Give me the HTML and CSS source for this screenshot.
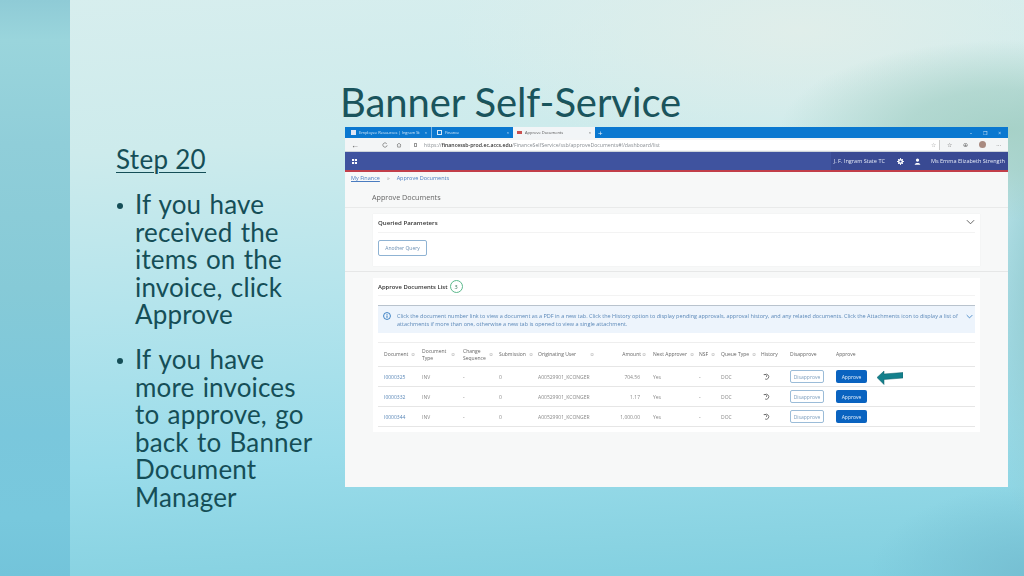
FILE: index.html
```html
<!DOCTYPE html>
<html lang="en">
<head>
<meta charset="utf-8">
<title>Banner Self-Service</title>
<link rel="stylesheet" href="styles.css">
</head>
<body>
<main class="slide">
  <div class="band"></div>
  <section class="notes">
    <h2 class="step">Step 20</h2>
    <ul class="points">
      <li>If you have received the items on the invoice, click Approve</li>
      <li>If you have more invoices to approve, go back to Banner Document Manager</li>
    </ul>
  </section>
  <section class="main">
    <h1 class="title">Banner Self-Service</h1>
    <div class="shot">
      <div class="tabs">
        <div class="tab tab-one"><span class="fav fav-blue"></span><span class="tab-label">Employee Resources | Ingram St</span><span>×</span></div>
        <div class="tab tab-two"><span class="fav fav-page"></span><span class="tab-label">Finance</span><span>×</span></div>
        <div class="tab tab-on"><span class="fav fav-red"></span><span class="tab-label">Approve Documents</span><span>×</span></div>
        <span class="plus">+</span>
        <div class="win"><span>–</span><span>❐</span><span>×</span></div>
      </div>
      <div class="addr">
        <span class="nav-ic">←</span>
        <svg class="ic reload" viewBox="0 0 10 10"><path d="M8 3a3.6 3.6 0 1 0 .6 2.5" fill="none" stroke="#555" stroke-width="1"/></svg>
        <svg class="ic" viewBox="0 0 10 10"><path d="M1.5 5 5 2l3.5 3M2.7 4.500V8.500h4.600V4.500" fill="none" stroke="#555" stroke-width=".9"/></svg>
        <div class="url"><span class="lock"></span><span class="u-dim">https://</span><span class="u-dark">financessb-prod.ec.accs.edu</span><span class="u-dim">/FinanceSelfService/ssb/approveDocuments#!/dashboard/list</span><span class="star">☆</span></div>
        <div class="tools"><span>☆</span><span>⊕</span><span class="avatar"></span><span>···</span></div>
      </div>
      <div class="appbar">
        <svg class="grid-ic" viewBox="0 0 6 6"><path d="M0 0h2.500v2.500H0zM3.500 0H6v2.500H3.500zM0 3.500h2.500V6H0zM3.500 3.500H6V6H3.500z" fill="#fff"/></svg>
        <div class="app-right">
          <span class="inst">J. F. Ingram State TC</span>
          <svg class="gear" viewBox="0 0 10 10"><circle cx="5" cy="5" r="2.600" fill="none" stroke="#fff" stroke-width="2"/><path d="M5 0v2M5 8v2M0 5h2M8 5h2M1.500 1.500l1.400 1.400M7.100 7.100l1.400 1.400M8.500 1.500 7.100 2.900M2.900 7.100 1.500 8.500" stroke="#fff" stroke-width="1.300"/></svg>
          <svg class="person" viewBox="0 0 10 10"><circle cx="5" cy="3" r="2.300" fill="#fff"/><path d="M1 9.500c0-3 8-3 8 0z" fill="#fff"/></svg>
          <span class="user">Ms Emma Elizabeth Strength</span>
        </div>
      </div>
      <div class="page">
        <div class="crumbs"><a class="crumb-root">My Finance</a><span class="crumb-sep">»</span><a>Approve Documents</a></div>
        <div class="page-title">Approve Documents</div>
        <div class="card card-query">
          <div class="card-head"><b>Queried Parameters</b><svg class="chev" viewBox="0 0 10 6"><path d="M1 1l4 4 4-4" fill="none" stroke="#555" stroke-width="1"/></svg></div>
          <button class="btn-query">Another Query</button>
        </div>
        <div class="rule"></div>
        <div class="card card-list">
          <div class="list-head"><b>Approve Documents List</b><span class="badge">3</span></div>
          <div class="info">
            <svg class="info-ic" viewBox="0 0 10 10"><circle cx="5" cy="5" r="4.300" fill="none" stroke="#1668b8" stroke-width="1"/><path d="M5 4.300v3M5 2.500v1" stroke="#1668b8" stroke-width="1.100"/></svg>
            <p>Click the document number link to view a document as a PDF in a new tab. Click the History option to display pending approvals, approval history, and any related documents. Click the Attachments icon to display a list of attachments if more than one, otherwise a new tab is opened to view a single attachment.</p>
            <svg class="info-chev" viewBox="0 0 10 6"><path d="M1 1l4 4 4-4" fill="none" stroke="#1668b8" stroke-width="1"/></svg>
          </div>
          <div class="table">
            <div class="row row-head">
              <span class="c-doc"><span class="h-l">Document</span><i>≎</i></span>
              <span class="c-type"><span class="h-l w-type">Document Type</span><i>≎</i></span>
              <span class="c-chg"><span class="h-l w-chg">Change Sequence</span><i>≎</i></span>
              <span class="c-sub"><span class="h-l">Submission</span><i>≎</i></span>
              <span class="c-user"><span class="h-l w-user">Originating User</span><i>≎</i></span>
              <span class="c-amt"><span class="h-l">Amount</span><i class="i-out">≎</i></span>
              <span class="c-next"><span class="h-l">Next Approver</span><i>≎</i></span>
              <span class="c-nsf"><span class="h-l">NSF</span><i>≎</i></span>
              <span class="c-q"><span class="h-l">Queue Type</span><i>≎</i></span>
              <span class="c-hist">History</span>
              <span class="c-dis">Disapprove</span>
              <span class="c-app">Approve</span>
            </div>
            <div class="row">
              <a class="c-doc">I0000325</a><span class="c-type">INV</span><span class="c-chg">-</span><span class="c-sub">0</span><span class="c-user">A00529901_KCONGER</span><span class="c-amt">704.56</span><span class="c-next">Yes</span><span class="c-nsf">-</span><span class="c-q">DOC</span>
              <span class="c-hist"><svg class="hist" viewBox="0 0 10 10"><path d="M2.500 2.500A3.600 3.600 0 1 1 3 8.600M1 2.200h2.600M5 3.300V5.600" fill="none" stroke="#444" stroke-width="1"/></svg></span>
              <span class="c-dis"><button class="btn-dis">Disapprove</button></span><span class="c-app"><button class="btn-app">Approve</button></span>
              <svg class="arrow" viewBox="0 0 26 15"><path d="M0 7.500 7 1v3L26 2.500V8L7 9.500v5z" fill="#14808c" stroke="#0f5f68" stroke-width=".5"/></svg>
            </div>
            <div class="row">
              <a class="c-doc">I0000332</a><span class="c-type">INV</span><span class="c-chg">-</span><span class="c-sub">0</span><span class="c-user">A00529901_KCONGER</span><span class="c-amt">1.17</span><span class="c-next">Yes</span><span class="c-nsf">-</span><span class="c-q">DOC</span>
              <span class="c-hist"><svg class="hist" viewBox="0 0 10 10"><path d="M2.500 2.500A3.600 3.600 0 1 1 3 8.600M1 2.200h2.600M5 3.300V5.600" fill="none" stroke="#444" stroke-width="1"/></svg></span>
              <span class="c-dis"><button class="btn-dis">Disapprove</button></span><span class="c-app"><button class="btn-app">Approve</button></span>
            </div>
            <div class="row">
              <a class="c-doc">I0000344</a><span class="c-type">INV</span><span class="c-chg">-</span><span class="c-sub">0</span><span class="c-user">A00529901_KCONGER</span><span class="c-amt">1,000.00</span><span class="c-next">Yes</span><span class="c-nsf">-</span><span class="c-q">DOC</span>
              <span class="c-hist"><svg class="hist" viewBox="0 0 10 10"><path d="M2.500 2.500A3.600 3.600 0 1 1 3 8.600M1 2.200h2.600M5 3.300V5.600" fill="none" stroke="#444" stroke-width="1"/></svg></span>
              <span class="c-dis"><button class="btn-dis">Disapprove</button></span><span class="c-app"><button class="btn-app">Approve</button></span>
            </div>
          </div>
        </div>
      </div>
    </div>
  </section>
</main>
</body>
</html>
```
FILE: styles.css
```css
* { box-sizing: border-box; }
html, body { margin: 0; padding: 0; width: 1024px; height: 576px; overflow: hidden; }
body { font-family: "Lato", "Liberation Sans", sans-serif; }

.slide {
  display: flex; width: 1024px; height: 576px; overflow: hidden;
  background:
    radial-gradient(ellipse 230px 90px at 1010px 130px, rgba(165,208,198,.95) 0%, rgba(165,208,198,.7) 45%, rgba(165,208,198,0) 100%),
    radial-gradient(ellipse 70px 240px at 1050px 300px, #8fc6cb 0%, rgba(143,198,203,0) 100%),
    radial-gradient(ellipse 160px 90px at 1030px 576px, #76bfd2 0%, rgba(118,191,210,0) 100%),
    radial-gradient(ellipse 350px 130px at 800px 30px, #e0eeea 0%, rgba(224,238,234,0) 100%),
    linear-gradient(177deg, #d7eeee 0%, #cdebec 25%, #b4e4ec 50%, #9adcea 75%, #89d3e2 92%, #80cfe0 100%);
  color: #154e57;
}
.band { flex: 0 0 70px; background: linear-gradient(180deg, #8fcbd6 0%, #9ad5dc 7%, #90ced9 25%, #86cad7 50%, #7ac7dc 75%, #78c8dd 90%, #73c4da 100%); }

.notes { flex: 0 0 275px; padding: 144px 30px 0 46px; }
.step { margin: 0; font-size: 26px; line-height: 31px; font-weight: 400; text-decoration: underline; text-decoration-thickness: 1px; text-underline-offset: 3px; letter-spacing: .3px; }
.points { list-style: none; margin: 16px 0 0; padding: 0; }
.points li { position: relative; padding-left: 19px; font-size: 26px; line-height: 27.500px; letter-spacing: .15px; word-spacing: 1.500px; margin-bottom: 17.500px; }
.points li::before { content: ""; position: absolute; left: 1px; top: 12px; width: 6px; height: 6px; border-radius: 50%; background: #154e57; }

.main { flex: 1; display: flex; flex-direction: column; }
.title { margin: 77px 0 0 -5px; font-size: 40px; line-height: 50px; font-weight: 400; letter-spacing: -.1px; color: #1a545c; white-space: nowrap; }

.shot { width: 663px; height: 360px; background: #f7f8f8; font-family: "Open Sans", "Liberation Sans", sans-serif; filter: blur(.45px); color: #555; overflow: hidden; }

.tabs { display: flex; align-items: center; height: 11px; background: #0a78d0; font-size: 4px; color: #d6e8f8; }
.tab { display: flex; align-items: center; gap: 3px; height: 11px; padding: 0 4px 0 6px; justify-content: space-between; }
.tab-one { flex: 0 0 86px; }
.tab-two { flex: 0 0 82px; padding-left: 5px; border-left: 1px solid #7ab4e4; }
.tab-on { flex: 0 0 82px; padding-left: 4px; background: #f2f5f7; color: #555; }
.tab-label { flex: 1; white-space: nowrap; overflow: hidden; }
.fav { flex: 0 0 5px; width: 5px; height: 5px; }
.fav-blue { background: #dfe6f5; }
.fav-page { border: 1px solid #d6e8f8; }
.fav-red { background: #c95050; height: 3px; }
.plus { margin-left: 3px; font-size: 8px; color: #e4f0fa; line-height: 8px; }
.win { margin-left: auto; display: flex; gap: 11px; padding-right: 7px; font-size: 5px; color: #cfe4f6; }

.addr { display: flex; align-items: center; height: 14px; background: #f3f5f6; padding-left: 6px; border-bottom: 1px solid #ccd3da; }
.nav-ic { font-size: 8px; line-height: 8px; color: #555; flex: 0 0 31px; }
.ic { flex: 0 0 6px; width: 6px; height: 6px; margin-right: 8px; }
.url { display: flex; align-items: center; flex: 0 0 530px; height: 10px; padding-left: 4px; background: #fff; font-size: 5.200px; white-space: nowrap; border-right: 1px solid #ccc; }
.lock { width: 3px; height: 4px; margin-right: 7px; border: 1px solid #999; }
.u-dim { color: #8a8f94; }
.u-dark { color: #333; font-weight: 600; }
.star { margin-left: auto; margin-right: 3px; color: #999; font-size: 6px; }
.tools { flex: 1; display: flex; align-items: center; justify-content: space-between; padding: 0 7px; font-size: 6px; color: #666; }
.avatar { width: 7px; height: 7px; border-radius: 50%; background: #a98a80; }

.appbar { display: flex; align-items: center; justify-content: space-between; height: 20px; background: #3f539f; border-bottom: 2px solid #c23f4a; color: #e4e9f6; font-size: 5.550px; padding-left: 7px; white-space: nowrap; }
.app-right { display: flex; align-items: center; height: 100%; padding: 0 3px 0 3px; background: #394a93; }
.grid-ic { width: 5px; height: 5px; }
.gear { width: 7px; height: 7px; margin-left: 12px; }
.person { width: 7px; height: 7px; margin-left: 10px; }
.user { margin-left: 10px; }

.page { font-size: 5px; }
.crumbs { display: flex; gap: 7px; padding: 2px 0 0 6px; height: 16px; color: #4a7cc0; font-size: 5.500px; line-height: 9px; }
.crumb-root { text-decoration: underline; }
.crumb-sep { color: #999; }
.page-title { height: 20px; padding: 4px 0 0 27px; font-size: 7.200px; line-height: 10px; color: #666; border-bottom: 1px solid #e9eaea; margin: 0 0 6px; }

.card { background: #fff; margin: 0 28px; }
.card b { font-weight: 600; color: #333; }
.card-query { height: 52px; padding: 0 5px; box-shadow: 0 0 1px #e8e8e8; }
.card-head { display: flex; align-items: center; justify-content: space-between; height: 19px; padding-bottom: 2px; font-size: 6.100px; border-bottom: 1px solid #f3f3f3; }
.chev { width: 9px; height: 6px; }
.btn-query { display: block; margin: 7px 0 0; width: 49px; height: 16px; padding: 0; background: #fff; border: 1px solid #8fb3d3; border-radius: 2px; color: #6b8fb3; font: 5px "Open Sans", sans-serif; }
.rule { border-bottom: 1px solid #e6e7e7; height: 6px; margin-bottom: 6px; }

.card-list { height: 154px; padding: 0 5px; }
.list-head { display: flex; align-items: center; gap: 2px; height: 18px; font-size: 5.900px; border-bottom: 1px solid #f3f3f3; }
.badge { display: flex; align-items: center; justify-content: center; width: 13px; height: 13px; border: 1px solid #5bb98c; border-radius: 50%; color: #2c6b4f; font-size: 5.500px; }
.info { display: flex; gap: 6px; height: 28px; margin-top: 9px; padding: 6px 2px 0 5px; background: #edf4fc; border-top: 1px solid #b9c3cd; color: #5b88b8; font-size: 5.500px; line-height: 8px; }
.info-ic { flex: 0 0 8px; width: 8px; height: 8px; }
.info p { margin: 0; flex: 1; }
.info-chev { flex: 0 0 7px; width: 7px; height: 5px; margin-top: 2px; }

.table { margin-top: 9px; border-top: 1px solid #eee; }
.row { position: relative; display: flex; align-items: center; height: 20px; border-bottom: 1px solid #e6e6e6; font-size: 5px; color: #888; white-space: nowrap; }
.row > * { min-width: 0; }
.row-head { height: 24px; color: #666; line-height: 7px; }
.row-head > span { display: flex; align-items: center; }
.h-l { white-space: normal; }
.w-type { flex: 0 0 24px; margin-right: 2px; }
.w-chg { flex: 0 0 22px; }
.w-user { flex: 0 0 49px; }
.row a { color: #5b88b8; }
.row i { flex: none; font-style: normal; color: #aaa; margin-left: 3px; }
.row i.i-out { margin-left: 1px; margin-right: -6px; }
.c-doc { flex: 0 0 44px; padding-left: 6px; }
.c-type { flex: 0 0 41px; }
.c-chg { flex: 0 0 36px; }
.c-sub { flex: 0 0 39px; }
.c-user { flex: 0 0 75px; }
.c-amt { flex: 0 0 27px; text-align: right; margin-right: 13px; }
.row-head > .c-amt { justify-content: flex-end; }
.c-next { flex: 0 0 46px; }
.c-nsf { flex: 0 0 22px; }
.c-q { flex: 0 0 40px; }
.c-hist { flex: 0 0 29px; }
.c-dis { flex: 0 0 46px; }
.c-app { flex: 0 0 40px; }
.hist { width: 7px; height: 7px; display: block; margin-left: 2px; }
.btn-dis, .btn-app { display: block; height: 13px; padding: 0; border-radius: 2px; font: 5px "Open Sans", sans-serif; }
.btn-dis { width: 34px; background: #fff; border: 1px solid #9bbcd8; color: #7fa0bf; }
.btn-app { width: 31px; background: #0a63c0; border: 0; color: #e6f0fb; }
.arrow { position: absolute; left: 499px; top: 3px; width: 26px; height: 15px; }
```
